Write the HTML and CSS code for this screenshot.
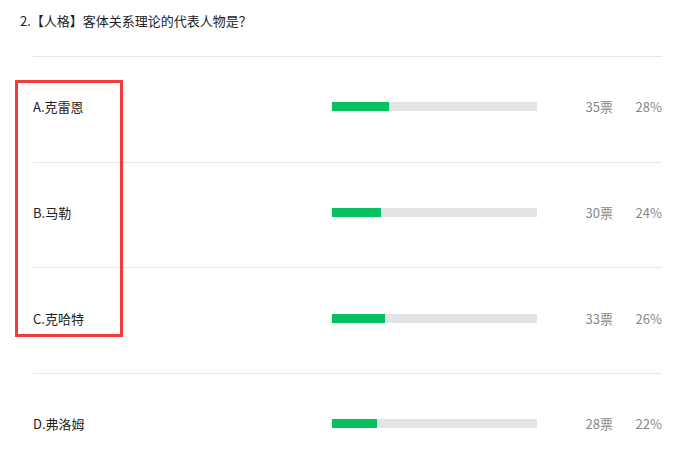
FILE: index.html
```html
<!DOCTYPE html>
<html lang="zh">
<head>
<meta charset="utf-8">
<link rel="stylesheet" href="styles.css">
</head>
<body>
<div class="page">
  <div class="title">2.【人格】客体关系理论的代表人物是？</div>
  <div class="list">
    <div class="row">
      <div class="label">A.克雷恩</div>
      <div class="bar"><div class="fill" style="width:28%"></div></div>
      <div class="votes">35票</div>
      <div class="pct">28%</div>
    </div>
    <div class="row">
      <div class="label">B.马勒</div>
      <div class="bar"><div class="fill" style="width:24%"></div></div>
      <div class="votes">30票</div>
      <div class="pct">24%</div>
    </div>
    <div class="row">
      <div class="label">C.克哈特</div>
      <div class="bar"><div class="fill" style="width:26%"></div></div>
      <div class="votes">33票</div>
      <div class="pct">26%</div>
    </div>
    <div class="row">
      <div class="label">D.弗洛姆</div>
      <div class="bar"><div class="fill" style="width:22%"></div></div>
      <div class="votes">28票</div>
      <div class="pct">22%</div>
    </div>
  </div>
  <div class="highlight"></div>
</div>
</body>
</html>
```
FILE: styles.css
```css
html, body {
  margin: 0;
  padding: 0;
  background: #fff;
}
body {
  font-family: "Noto Sans CJK SC", "Liberation Sans", sans-serif;
  font-size: 13px;
  color: #222;
  overflow: hidden;
}
.page {
  position: relative;
  width: 677px;
  height: 450px;
  overflow: hidden;
}
.title {
  padding: 12px 0 0 20px;
  line-height: 18px;
  height: 18px;
  margin-bottom: 26px;
}
.list {
  margin-left: 33px;
  width: 629px;
}
.row {
  display: grid;
  grid-template-columns: 299px 205px 76px 49px;
  align-items: center;
  box-sizing: border-box;
  height: 105.67px;
  padding-bottom: 4px;
  border-top: 1px solid #e6e6e6;
  line-height: 18px;
}
.bar {
  height: 9px;
  margin-top: -1px;
  background: #e3e4e6;
}
.fill {
  height: 100%;
  background: #07c160;
}
.votes, .pct {
  text-align: right;
  color: #888;
}
.highlight {
  position: absolute;
  left: 15px;
  top: 80px;
  width: 102px;
  height: 251px;
  border: 3px solid #f23c3c;
}
```
